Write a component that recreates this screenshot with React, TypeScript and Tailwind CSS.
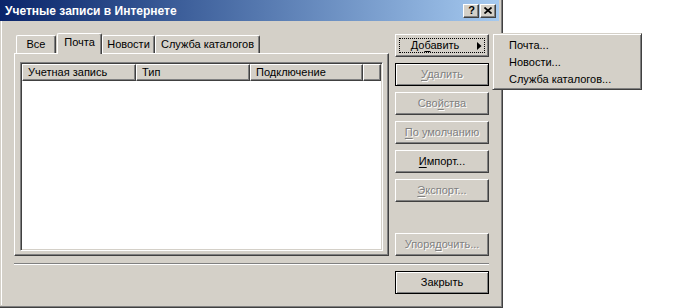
import React from 'react'

const raised =
  'border border-t-white border-l-white border-r-[#404040] border-b-[#404040] shadow-[inset_-1px_-1px_0_#808080]'
const defaultFrame = 'border border-black shadow-[inset_1px_1px_0_#fff,inset_-1px_-1px_0_#808080]'
const disabledText = 'text-[#808080] [text-shadow:1px_1px_0_#fff]'

function U({ c }: { c: string }) {
  return <span className="underline underline-offset-[2px]">{c}</span>
}

function Btn(props: {
  children: React.ReactNode
  disabled?: boolean
  isDefault?: boolean
  className?: string
}) {
  const { children, disabled, isDefault, className = '' } = props
  return (
    <div
      className={`h-[23px] w-[94px] shrink-0 bg-[#d4d0c8] flex items-center justify-center ${
        isDefault ? defaultFrame : raised
      } ${disabled ? disabledText : 'text-black'} ${className}`}
    >
      <span>{children}</span>
    </div>
  )
}

function Tab({ label, w, active, className = '' }: { label: string; w: string; active?: boolean; className?: string }) {
  if (active) {
    return (
      <div
        className={`${w} h-[21px] -mb-px z-10 relative bg-[#d4d0c8] border-l border-t border-r border-l-white border-t-white border-r-[#404040] rounded-t-[2px] shadow-[inset_-1px_0_0_#808080] flex items-center justify-center pb-[3px] ${className}`}
      >
        {label}
      </div>
    )
  }
  return (
    <div
      className={`${w} h-[18px] bg-[#d4d0c8] border-l border-t border-r border-l-white border-t-white border-r-[#404040] rounded-t-[2px] shadow-[inset_-1px_0_0_#808080] flex items-center justify-center ${className}`}
    >
      {label}
    </div>
  )
}

function HeaderCell({ label, w }: { label: string; w: string }) {
  return <div className={`${w} h-[17px] ${raised} pl-[5px] flex items-center`}>{label}</div>
}

function MenuItem({ label }: { label: string }) {
  return <div className="h-[17px] pl-[16px] flex items-center">{label}</div>
}

export default function App() {
  return (
    <div className="relative w-[692px] h-[308px] bg-white overflow-hidden font-['Liberation_Sans',Arial,sans-serif] text-[11px] text-black leading-none select-none">
      <div className="w-[503px] h-[308px] bg-[#d4d0c8] border-r border-b border-r-[#404040] border-b-[#404040] shadow-[inset_-1px_-1px_0_#808080] pr-[3px] pb-[2px] flex flex-col">
        {/* title bar */}
        <div className="h-[21px] shrink-0 flex items-center bg-linear-to-r from-[#0a246a] to-[#a6caf0] pl-[5px] pr-[3px]">
          <span className="flex-1 font-bold text-white text-[12px]">Учетные записи в Интернете</span>
          <div className="flex gap-[1px]">
            <div className={`w-[16px] h-[14px] bg-[#d4d0c8] ${raised} flex items-center justify-center font-bold text-[11px] pl-px`}>
              ?
            </div>
            <div className={`w-[16px] h-[14px] bg-[#d4d0c8] ${raised} flex items-center justify-center`}>
              <svg width="8" height="7" viewBox="0 0 8 7">
                <path d="M0.5 0.5 L7.5 6.5 M7.5 0.5 L0.5 6.5" stroke="#000" strokeWidth="1.7" />
              </svg>
            </div>
          </div>
        </div>

        {/* body */}
        <div className="flex-1 ml-px border-l border-white pl-[12px] pt-[12px] flex flex-col">
          <div className="flex gap-[6px] h-[223px]">
            {/* tab control */}
            <div className="w-[375px] flex flex-col">
              <div className="flex items-end h-[20px] pl-[2px]">
                <Tab label="Все" w="w-[40px]" />
                <Tab label="Почта" w="w-[45px]" active className="ml-px" />
                <Tab label="Новости" w="w-[53px]" />
                <Tab label="Служба каталогов" w="w-[105px]" />
              </div>
              <div className="flex-1 border-l border-t border-l-white border-t-white border-r border-b border-r-[#404040] border-b-[#404040] shadow-[inset_-1px_-1px_0_#808080] pt-[8px] pb-[4px] px-[5px] flex">
                <div className="flex-1 border-t border-l border-t-[#808080] border-l-[#808080] border-b border-r border-b-white border-r-white shadow-[inset_1px_1px_0_#404040,inset_-1px_-1px_0_#d4d0c8] p-px flex flex-col">
                  <div className="flex">
                    <HeaderCell label="Учетная запись" w="w-[114px]" />
                    <HeaderCell label="Тип" w="w-[114px]" />
                    <HeaderCell label="Подключение" w="w-[113px]" />
                    <HeaderCell label="" w="flex-1" />
                  </div>
                  <div className="flex-1 bg-white" />
                </div>
              </div>
            </div>

            {/* right buttons */}
            <div className="w-[94px] flex flex-col gap-[6px] pt-px">
              <div className={`relative h-[23px] w-[94px] shrink-0 bg-[#d4d0c8] ${raised} flex items-center`}>
                <span className="absolute inset-[3px] border border-dotted border-black" />
                <span className="w-[78px] text-center">
                  До<U c="б" />авить
                </span>
                <svg width="5" height="8" viewBox="0 0 5 8" className="ml-[3px]">
                  <path d="M0 0 L4.5 4 L0 8 Z" fill="#000" />
                </svg>
              </div>
              <Btn disabled isDefault>
                <U c="У" />далить
              </Btn>
              <Btn disabled>
                Сво<U c="й" />ства
              </Btn>
              <Btn disabled>
                <U c="П" />о умолчанию
              </Btn>
              <Btn>
                <U c="И" />мпорт...
              </Btn>
              <Btn disabled>
                <U c="Э" />кспорт...
              </Btn>
              <Btn disabled className="mt-auto">
                Упоря<U c="д" />очить...
              </Btn>
            </div>
          </div>

          <div className="w-[475px] mt-[7px] border-t border-t-[#808080] border-b border-b-white" />

          <div className="w-[475px] mt-[6px] flex justify-end">
            <Btn isDefault>Закрыть</Btn>
          </div>
        </div>
      </div>

      {/* popup menu */}
      <div className="absolute left-[492px] top-[33px] w-[150px] h-[57px] bg-[#d4d0c8] border border-t-[#d4d0c8] border-l-[#d4d0c8] border-r-[#404040] border-b-[#404040] shadow-[inset_1px_1px_0_#fff,inset_-1px_-1px_0_#808080] pt-[3px]">
        <MenuItem label="Почта..." />
        <MenuItem label="Новости..." />
        <MenuItem label="Служба каталогов..." />
      </div>
    </div>
  )
}
